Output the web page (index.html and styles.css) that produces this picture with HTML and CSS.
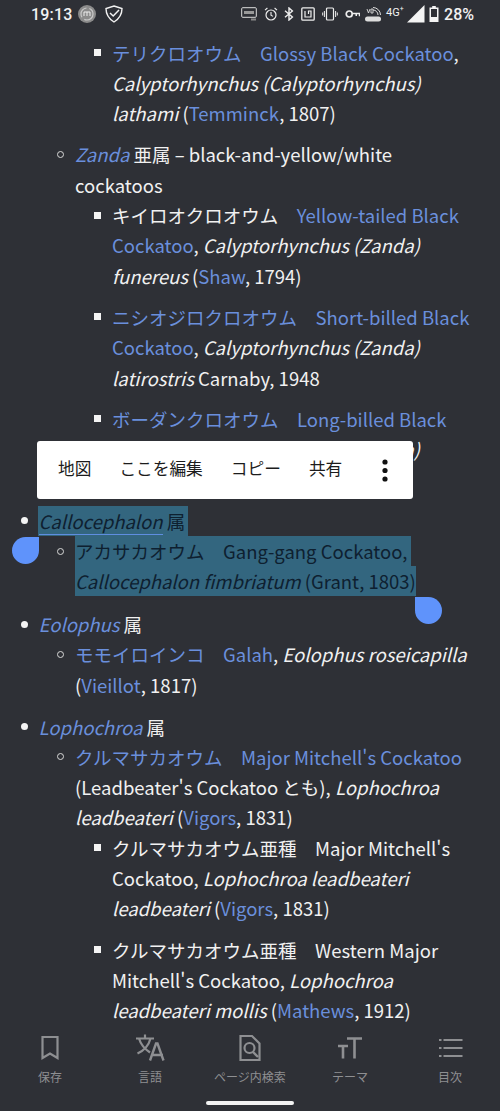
FILE: index.html
```html
<!DOCTYPE html>
<html lang="ja">
<head>
<meta charset="utf-8">
<title>Cockatoo</title>
<link rel="stylesheet" href="styles.css">
</head>
<body>
<div class="phone">
  <header class="status">
    <div class="status-left">
      <span class="clock">19:13</span>
      <svg class="ic-mi" viewBox="0 0 18 18"><circle cx="9" cy="9" r="9" fill="#8b8b8b"/><circle cx="9" cy="9" r="6" fill="none" stroke="#c9c9c9" stroke-width="1.2" stroke-dasharray="12 3"/><path d="M6 11V7h6v4M9 7v4" fill="none" stroke="#eee" stroke-width="1"/></svg>
      <svg class="ic-shield" viewBox="0 0 18 18"><path d="M9 1 L17 3.5 Q17 12 9 17 Q1 12 1 3.5 Z" fill="none" stroke="#f2f2f2" stroke-width="1.4"/><path d="M5 8 L8.2 11 L14 5" fill="none" stroke="#f2f2f2" stroke-width="1.5"/></svg>
    </div>
    <div class="status-right">
      <svg class="s-auto" viewBox="0 0 16 14"><rect x=".7" y=".7" width="14.6" height="9.6" rx="1" fill="none" stroke="#ddd"/><rect x="3" y="4" width="10" height="3" fill="#999"/><rect x="10" y="11.500" width="5" height="2" fill="#888"/></svg>
      <svg class="s-alarm" viewBox="0 0 14 14"><circle cx="7" cy="8" r="5" fill="none" stroke="#eee" stroke-width="1.2"/><path d="M7 5v3.2l2 1.2M1 3.2 3.4 1M13 3.2 10.6 1" fill="none" stroke="#eee" stroke-width="1.1"/></svg>
      <svg class="s-bt" viewBox="0 0 10 14"><path d="M1 3.8 8.4 10 5 13V1l3.4 3L1 10.2" fill="none" stroke="#eee" stroke-width="1.4"/></svg>
      <svg class="s-nfc" viewBox="0 0 14 14"><rect x=".8" y=".8" width="12.4" height="12.4" rx="1" fill="none" stroke="#eee" stroke-width="1.3"/><path d="M4 4v6h6V4H7.5v3" fill="none" stroke="#eee" stroke-width="1.2"/></svg>
      <svg class="s-vib" viewBox="0 0 16 14"><rect x="4.5" y="1" width="7" height="12" rx="1" fill="none" stroke="#eee" stroke-width="1.2"/><path d="M2.4 4v6M.7 5.5v3M13.6 4v6M15.3 5.5v3" stroke="#eee" stroke-width="1"/></svg>
      <svg class="s-key" viewBox="0 0 16 10"><circle cx="4.5" cy="5" r="3.2" fill="none" stroke="#eee" stroke-width="1.8"/><path d="M7.8 4.500H15.500V7.500M12 4.500V7" fill="none" stroke="#eee" stroke-width="1.600"/></svg>
      <svg class="s-volte" viewBox="0 0 18 16"><path d="M9 4a5 5 0 0 1 5 5M9 1.500a7.500 7.500 0 0 1 7.500 7.500" fill="none" stroke="#ddd"/><path d="M3 3l1.500 4L6 3M7 3h2v4H7z" fill="none" stroke="#ddd" stroke-width=".9"/><rect x="1" y="10.500" width="16" height="5" rx="2.500" fill="#ddd"/></svg>
      <span class="s-4g">4G<sup>+</sup></span>
      <svg class="s-signal" viewBox="0 0 18 18"><path d="M17.500 0V17.500H0Z" fill="#f4f4f4"/></svg>
      <svg class="s-batt" viewBox="0 0 10 16"><path d="M3.200 0h3.600v1.500H9.500V16H.5V1.500h2.700z" fill="#f4f4f4"/><rect x="2" y="3" width="6" height="8" fill="#2e3036"/></svg>
      <span class="pct">28%</span>
    </div>
  </header>

  <main class="article">
    <ul class="l1">
      <li class="bare">
        <ul class="l2">
          <li class="bare">
            <ul class="l3">
              <li class="para"><a href="#">テリクロオウム　Glossy Black Cockatoo</a>, <i>Calyptorhynchus (Calyptorhynchus) lathami</i> (<a href="#">Temminck</a>, 1807)</li>
            </ul>
          </li>
          <li><a href="#"><i>Zanda</i></a> 亜属 – black-and-yellow/white cockatoos
            <ul class="l3">
              <li class="para">キイロオクロオウム　<a href="#">Yellow-tailed Black Cockatoo</a>, <i>Calyptorhynchus (Zanda) funereus</i> (<a href="#">Shaw</a>, 1794)</li>
              <li class="para"><a href="#">ニシオジロクロオウム　Short-billed Black Cockatoo</a>, <i>Calyptorhynchus (Zanda) latirostris</i> Carnaby, 1948</li>
              <li class="para"><a href="#">ボーダンクロオウム　Long-billed Black Cockatoo</a>, <i>Calyptorhynchus (Zanda) baudinii</i> Lear, 1832</li>
            </ul>
          </li>
        </ul>
      </li>
      <li class="sect sect-sel"><span class="sel sel-first"><a class="sel-link" href="#"><i>Callocephalon</i></a> 属</span>
        <ul class="l2">
          <li><span class="sel">アカサカオウム　Gang-gang Cockatoo,&nbsp;</span><br><span class="sel"><i>Callocephalon fimbriatum</i> (Grant, 1803)</span></li>
        </ul>
      </li>
      <li class="sect"><a href="#"><i>Eolophus</i></a> 属
        <ul class="l2">
          <li><a href="#">モモイロインコ　Galah</a>, <i>Eolophus roseicapilla</i> (<a href="#">Vieillot</a>, 1817)</li>
        </ul>
      </li>
      <li class="sect"><a href="#"><i>Lophochroa</i></a> 属
        <ul class="l2">
          <li><a href="#">クルマサカオウム　Major Mitchell's Cockatoo</a> (Leadbeater's Cockatoo とも), <i>Lophochroa leadbeateri</i> (<a href="#">Vigors</a>, 1831)
            <ul class="l3">
              <li class="para">クルマサカオウム亜種　Major Mitchell's Cockatoo, <i>Lophochroa leadbeateri leadbeateri</i> (<a href="#">Vigors</a>, 1831)</li>
              <li class="para">クルマサカオウム亜種　Western Major Mitchell's Cockatoo, <i>Lophochroa leadbeateri mollis</i> (<a href="#">Mathews</a>, 1912)</li>
            </ul>
          </li>
        </ul>
      </li>
    </ul>

    <nav class="popup">
      <span>地図</span>
      <span>ここを編集</span>
      <span>コピー</span>
      <span>共有</span>
      <svg class="more" viewBox="0 0 8 24"><circle cx="4" cy="4" r="2.600"/><circle cx="4" cy="12.500" r="2.600"/><circle cx="4" cy="21" r="2.600"/></svg>
    </nav>
    <div class="handle handle-start"></div>
    <div class="handle handle-end"></div>
  </main>

  <footer class="tabs">
    <div class="tab">
      <svg viewBox="0 0 24 28"><path d="M4.500 3h15v21l-7.500-4.500L4.500 24z" fill="none" stroke="#8e8f92" stroke-width="2.200"/></svg>
      <span>保存</span>
    </div>
    <div class="tab">
      <svg class="wide" viewBox="0 0 30 28"><path d="M1 4.500H19M10 .5v4M4 4.500c2 7 8 12 11 14M15.500 4.500c-1.500 6-6.500 12-13 15" fill="none" stroke="#8e8f92" stroke-width="2.200"/><path d="M15 26.500 21 9.500h1.500l6 17M17 21h11" fill="none" stroke="#8e8f92" stroke-width="2.400"/></svg>
      <span>言語</span>
    </div>
    <div class="tab">
      <svg viewBox="0 0 24 28"><path d="M2.500 2h11.500L21.500 9.500V26H2.500z" fill="none" stroke="#8e8f92" stroke-width="2.200"/><circle cx="11.500" cy="14" r="5" fill="none" stroke="#8e8f92" stroke-width="2.200"/><path d="M15 18l5 5" stroke="#8e8f92" stroke-width="2.400"/></svg>
      <span>ページ内検索</span>
    </div>
    <div class="tab">
      <svg class="wide" viewBox="0 0 30 28"><path d="M12 4.500h15M19.500 4.500v20M3 12h10M8 12v12.500" fill="none" stroke="#8e8f92" stroke-width="2.600"/></svg>
      <span>テーマ</span>
    </div>
    <div class="tab">
      <svg class="wide" viewBox="0 0 30 28"><path d="M8.500 6h19M8.500 14h19M8.500 22h19M4 6h2.500M4 14h2.500M4 22h2.500" fill="none" stroke="#8e8f92" stroke-width="2.200"/></svg>
      <span>目次</span>
    </div>
    <div class="home-bar"></div>
  </footer>
</div>
</body>
</html>
```
FILE: styles.css
```css
html, body { margin: 0; padding: 0; }
body { background: #2e3036; }

.phone {
  width: 500px;
  height: 1111px;
  display: flex;
  flex-direction: column;
  overflow: hidden;
  background: #2e3036;
  color: #f1f1f1;
  font-family: "Noto Sans CJK JP", "Noto Sans", sans-serif;
}

/* status bar */
.status {
  height: 28px;
  flex: none;
  display: flex;
  justify-content: space-between;
  align-items: center;
  padding: 0 26px 0 31px;
  font-family: Roboto, sans-serif;
  color: #f2f2f2;
}
.status-left, .status-right { display: flex; align-items: center; }
.clock { font-size: 16px; font-weight: 500; letter-spacing: .2px; }
.ic-mi { width: 18px; height: 18px; margin-left: 5px; }
.ic-shield { width: 18px; height: 18px; margin-left: 9px; }
.s-auto { width: 16px; height: 14px; }
.s-alarm { width: 14px; height: 14px; margin-left: 7px; }
.s-bt { width: 10px; height: 14px; margin-left: 6px; }
.s-nfc { width: 14px; height: 14px; margin-left: 7px; }
.s-vib { width: 16px; height: 14px; margin-left: 7px; }
.s-key { width: 15px; height: 10px; margin-left: 7px; }
.s-volte { width: 18px; height: 16px; margin-left: 4px; }
.s-4g { font-size: 11px; margin-left: 4px; width: 19px; position: relative; top: -2px; }
.s-4g sup { font-size: 7px; line-height: 0; }
.s-signal { width: 18px; height: 18px; margin-left: 2px; }
.s-batt { width: 10px; height: 16px; margin-left: 4px; }
.pct { font-size: 16px; font-weight: 500; margin-left: 5px; }

/* article */
.article {
  flex: 1;
  min-height: 0;
  position: relative;
  overflow: hidden;
  padding-top: 9.600px;
  font-size: 18.500px;
  line-height: 30.3px;
}
ul { margin: 0; padding: 0; list-style: none; }
.l1 { padding: 0 24px 0 38.500px; }
.l2 { padding-left: 36.500px; }
.l3 { padding-left: 37px; }
li { position: relative; }
.para { margin-bottom: 11px; }
.sect { margin-bottom: 11.500px; }
.sect-sel { margin-bottom: 12.500px; }
.l2 > li { margin-bottom: 11px; }
.l2 > .bare { margin-bottom: 0; }
.sect > .l2 > li:last-child { margin-bottom: 0; }
.sect > .l2 > li > .l3 { margin-bottom: -11px; }

/* list markers, hung in the gutter */
.l1 > li::before,
.l2 > li::before,
.l3 > li::before {
  content: "";
  position: absolute;
  box-sizing: border-box;
  top: 11.500px;
  width: 7px;
  height: 7px;
}
.l1 > li::before { left: -18px; border-radius: 50%; background: #f4f4f4; }
.l2 > li::before { left: -18px; border-radius: 50%; border: 1px solid #d8d8d8; }
.l3 > li::before { left: -18px; background: #f4f4f4; }
.bare::before { display: none; }

a { color: #6a8fdc; text-decoration: none; }
i { font-style: italic; }

.sel {
  display: inline-block;
  background: #33667f;
  color: #0e2030;
  line-height: 30px;
  vertical-align: top;
}
.sel-first { margin-left: -1px; padding: 0 3px 0 1px; }
.sel-link { color: #0e2030; border-bottom: 1.500px solid #5f8ee0; }

/* floating selection toolbar */
.popup {
  position: absolute;
  left: 37px;
  top: 413px;
  width: 376px;
  height: 58px;
  box-sizing: border-box;
  padding: 0 24px 3px 21px;
  display: flex;
  align-items: center;
  gap: 28px;
  background: #fff;
  border-radius: 3px;
  color: #1c1c1c;
  font-size: 16.700px;
}
.more { width: 8px; height: 24px; fill: #111; margin: 3px 0 0 auto; }

.handle {
  position: absolute;
  width: 27px;
  height: 27px;
  background: #5f93fb;
}
.handle-start { left: 12px; top: 509px; border-radius: 50% 0 50% 50%; }
.handle-end { left: 415px; top: 569px; border-radius: 0 50% 50% 50%; }

/* bottom tabs */
.tabs {
  height: 89px;
  flex: none;
  position: relative;
  display: flex;
  padding: 12px 0 0;
  box-sizing: border-box;
  background: #2e3036;
  color: #8e8f92;
}
.tab {
  flex: 1;
  display: flex;
  flex-direction: column;
  align-items: center;
  font-size: 12px;
  line-height: 18px;
}
.tab svg { width: 24px; height: 28px; margin-bottom: 6px; }
.tab svg.wide { width: 30px; }
.home-bar {
  position: absolute;
  left: 206px;
  top: 79px;
  width: 88px;
  height: 4px;
  border-radius: 2px;
  background: #f2f2f2;
}
```
